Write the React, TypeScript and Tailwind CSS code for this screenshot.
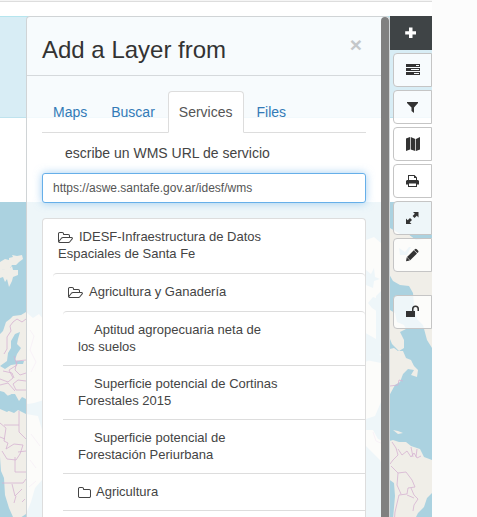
import { useState } from 'react';
import type { ReactNode } from 'react';
import clsx from 'clsx';

function WorldMap() {
  return (
    <svg
      aria-hidden="true"
      className="absolute inset-0 h-full w-full"
      viewBox="0 16 432 501"
      preserveAspectRatio="xMinYMin slice"
    >
      <rect x="0" y="16" width="432" height="501" fill="#fff" />
      <rect x="0" y="16" width="432" height="102" fill="#d8edf5" />
      <rect x="0" y="16" width="432" height="1" fill="#b5e5ee" />
      <rect x="0" y="117" width="432" height="1" fill="#bfe3ee" />
      <rect x="0" y="202" width="432" height="315" fill="#abd2e0" />
      <g fill="#f0eee8">
        <path d="M0 262l5-3 4 1 0-2 4-1-1-2 5 1 5-1 1 4-4 3-3 3-4 0-2 3-6 2-4-1z" />
        <path d="M0 268l4 2 2-3 4 1 2-2 1 4 5 0 0 5-5 2-1 4-3 6-2-8-2 3-2-5-3 1z" />
        <path d="M26 312l-5 3-8 1-3 3-4 3-3 9-3 3v68l4 0 3-6 5-2 4 4 3 7 4-3 5 2 6-1 10-3v-80l-5-6-6 4z" />
        <path d="M0 409l5-1 4 3 5 2 4-3 8 4 12 2 4 14v50l-7 8-4 14-5 12-6 4-7-1-4-9-4-13-1-17-3-7-1-14z" />
        <path d="M366 240l8-3 7 6 9-6 0-9 5 3 7 4 8 0 6 5 16-2v110l-5-8-4-15-6-6-3-14-1-12-4-7-9-1-7-4-4-7-3 12-10 10v43l-14-8z" />
        <path d="M390 310l5 3 2 9 7 3 2 4-6 3 4 8 0 8-5 3-7-7-2-5z" />
        <path d="M390 349l4-1 4 3 5 0 3 7 5 2 3 6 4 4-1 7-6-2 3-5-6-1-5 5-3 8-5 3-6 11-8 6-6 14-9 3-6-4v-50z" />
        <path d="M366 430l7 0 5 9 8 3 7-2 6 2 7 0 5 4 9 3 4 8 8 3v33l-5 5-3 9-6 6-3 6h-22l2-23-1-13-7-5-7-18-14-14z" />
        <path d="M393 430l5 1 5 2-5 1z" />
      </g>
      <g fill="#abd2e0">
        <path d="M20 332l-5 2-4 7 0 7-3 5-1 8-7 5 5 3 6-4 7-1 5 0 1-3-6 0-3-1 2-6 4-6-4-4 1-5z" />
        <path d="M0 391l4 1 5 5 3 5 3-1-4-7 4 0 4 7 3-4 4 2v10l-13-1-6 4-7-3z" />
        <path d="M399 248l6 4 4-5 2 0-4 8-7 0zM408 234l9 1 6 3-8 1z" />
        <path d="M366 270l5 4 3-6 1 9 5 2-6 2-1 7-7-3zM368 303l5-6 6 2-1 13-6-4zM366 340l6 8 9 8v7l-15-3z" />
      </g>
      <g fill="none" stroke="#d5b3d2" strokeWidth="0.8">
        <path d="M26 319l-4 3-5-3-4 3-3 4 1 5-4 6 0 12-3 5M26 360l-9 1-2 9 5 5 6-2M14 356l3 9-8 5 4 8-5 4-8-3M26 381l-8-1-5 4 3 6 10 0M3 371l9 2 2 5M30 330l4 6-4 14 6 12-5 10M0 385l8-2 7 8" />
        <path d="M19 411v21l7 7M19 425H4M0 423l6 5-2 13 4 2-2 6M0 437l5 2M6 449l8-5 9 1-3 9-4 6-9-1-5-8M26 451l-8 1M15 457v15h11M2 483h21l3-4M12 484l3 12 7-7M16 496l-2 7M22 502l3-3M31 434l9 12M30 460l6 8M29 487l7-6" />
        <path d="M390 386l8-1 1-5 4 1M392 442l4 6 2 7-5 5-3 4M398 449l4 6 5-4 4 6 3-4 3 5 4-2M411 447l2 10M417 449l-1 8M391 466l7 7 8-1 6 8 3 7-7 1-1 6-8 1-4 17-1 12M398 473l-1 12 4 9M411 488l3 7 4 4-4 6-1 6M407 495l7 3M373 432l3 9 7 3" />
      </g>
    </svg>
  );
}

function ToolIcon({ children }: { children: ReactNode }) {
  return (
    <svg aria-hidden="true" className="size-3.5 shrink-0" viewBox="0 0 14 14" fill="currentColor">
      {children}
    </svg>
  );
}

const tools: { label: string; apart?: boolean; icon: ReactNode }[] = [
  {
    label: 'Layers',
    icon: <path fillRule="evenodd" d="M0 1h14v3H0zM10 2v1h3V2zM0 5h14v3H0zM5 6v1h8V6zM0 9h14v3H0zM8 10v1h5v-1z" />,
  },
  { label: 'Filter', icon: <path d="M1 2h11v1L8 7.500V13L5.500 11V7.500L1 3z" /> },
  { label: 'Base map', icon: <path d="M0 1.500L4 0v12.500L0 14zM4.700 0L9.300 2v12l-4.600-1.500zM10 2l4-2v12.500L10 14z" /> },
  {
    label: 'Print',
    icon: (
      <path
        fillRule="evenodd"
        d="M2 1h6.500L11 3.500V6h1l1 1v3.500h-2V13H2v-2.500H0V7l1-1h1zM3 2v4h7V4H8V2zM3 9.500V12h7V9.500z"
      />
    ),
  },
  {
    label: 'Full extent',
    icon: <path d="M7 1h5.500v5.500L10.800 4.800 8.500 7 6.600 5.100 8.800 2.800zM0 13V7.500l1.700 1.700L4 7l2 2-2.300 2.300L5.500 13z" />,
  },
  {
    label: 'Draw',
    icon: <path d="M8.800 1.300q1-1 2 0l1.200 1.200q1 1 0 2l-.6.600-3.200-3.200zM7.800 2.300l3.200 3.200-6.800 6.800L1 9.100zM.7 9.300L3.900 12.500 0 13.300z" />,
  },
  {
    label: 'Unlock map',
    apart: true,
    icon: <path d="M0 6h6V4q0-3.500 3.500-3.500T13 4v2h-1.500V4q0-2-2-2t-2 2v2H9v6H0z" />,
  },
];

function Toolbar() {
  return (
    <div role="toolbar" aria-label="Map tools" className="flex w-[42px] shrink-0 flex-col items-end gap-[3px]">
      <button
        type="button"
        aria-label="Add layer"
        className="flex h-[34px] w-full items-center justify-center bg-[#3f4446] text-white"
      >
        <ToolIcon>
          <path d="M5 1.500h3.500v3.700H12v3.300H8.500V12H5V8.500H1.200V5.200H5z" />
        </ToolIcon>
      </button>
      {tools.map((tool) => (
        <button
          key={tool.label}
          type="button"
          aria-label={tool.label}
          className={clsx(
            'flex h-[34px] w-[39px] items-center justify-center rounded-l border border-[#c5c5c5] bg-white/80 text-[#333]',
            tool.apart && 'mt-5',
          )}
        >
          <ToolIcon>{tool.icon}</ToolIcon>
        </button>
      ))}
    </div>
  );
}

function FolderOpenIcon() {
  return (
    <svg
      aria-hidden="true"
      className="mr-1.5 inline-block h-[11px] w-[15px] align-[-2px]"
      viewBox="0 0 1920 1408"
      fill="currentColor"
    >
      <path d="M1781 803q0-35-53-35H640q-40 0-85.500 21.500T483 842l-294 363q-18 24-18 40 0 35 53 35h1088q40 0 86-22t71-53l294-363q18-22 18-39zM640 640h768V480q0-40-28-68t-68-28H736q-40 0-68-28t-28-68v-64q0-40-28-68t-68-28H224q-40 0-68 28t-28 68v853l256-315q44-53 116-87.500T640 640zm1269 163q0 62-46 120l-295 363q-43 53-116 87.500t-140 34.500H224q-92 0-158-66T0 1184V224q0-92 66-158T224 0h320q92 0 158 66t66 158v32h544q92 0 158 66t66 158v160h192q54 0 99 24.500t67 70.500q15 32 15 68z" />
    </svg>
  );
}

function FolderIcon() {
  return (
    <svg
      aria-hidden="true"
      className="mr-[5px] inline-block h-[11px] w-[13px] align-[-2px]"
      viewBox="0 0 1664 1408"
      fill="currentColor"
    >
      <path d="M1536 1184V480q0-40-28-68t-68-28H736q-40 0-68-28t-28-68v-64q0-40-28-68t-68-28H224q-40 0-68 28t-28 68v960q0 40 28 68t68 28h1216q40 0 68-28t28-68zm128-704v704q0 92-66 158t-158 66H224q-92 0-158-66T0 1184V224q0-92 66-158T224 0h320q92 0 158 66t66 158v32h672q92 0 158 66t66 158z" />
    </svg>
  );
}

function TreeButton({ leaf, children }: { leaf?: boolean; children: ReactNode }) {
  return (
    <button
      type="button"
      className={clsx('block w-full pt-[9px] pr-[86px] pb-2.5 pl-[15px] text-left', leaf && 'indent-4')}
    >
      {children}
    </button>
  );
}

const layers = [
  'Aptitud agropecuaria neta de los suelos',
  'Superficie potencial de Cortinas Forestales 2015',
  'Superficie potencial de Forestación Periurbana',
];

function LayerTree() {
  return (
    <ul className="mt-[15px] flex-1 rounded-t border border-b-0 border-[#ddd] bg-white text-[13px] leading-[17px] text-[#444]">
      <li>
        <TreeButton>
          <FolderOpenIcon />
          IDESF-Infraestructura de Datos Espaciales de Santa Fe
        </TreeButton>
        <ul className="mt-px ml-2.5 rounded-t border-t border-[#ddd]">
          <li>
            <TreeButton>
              <FolderOpenIcon />
              Agricultura y Ganadería
            </TreeButton>
            <ul className="mt-px ml-2.5">
              {layers.map((name) => (
                <li key={name} className="border-t border-[#ddd] first:rounded-t">
                  <TreeButton leaf>{name}</TreeButton>
                </li>
              ))}
              <li className="border-y border-[#ddd]">
                <TreeButton>
                  <FolderIcon />
                  Agricultura
                </TreeButton>
              </li>
            </ul>
          </li>
        </ul>
      </li>
    </ul>
  );
}

const tabs = ['Maps', 'Buscar', 'Services', 'Files'];

function AddLayerPanel() {
  const [active, setActive] = useState('Services');
  const [url, setUrl] = useState('https://aswe.santafe.gov.ar/idesf/wms');

  return (
    <section className="ml-[26px] flex min-w-0 flex-1 overflow-hidden rounded-t border border-b-0 border-[#d0d4d6] bg-white/80">
      <div className="flex min-w-0 flex-1 flex-col">
        <header className="flex items-start justify-between border-b border-[#d5d9dc] px-[15px] pt-4 pb-3">
          <h3 className="mt-1 text-2xl leading-[26px] text-[#333]">Add a Layer from</h3>
          <button type="button" aria-label="Close" className="px-1 text-[21px] leading-6 font-bold text-[#c5c8ca]">
            ×
          </button>
        </header>
        <div className="flex flex-1 flex-col px-[15px] pt-[15px]">
          <div role="tablist" className="flex gap-0.5 border-b border-[#ddd] text-sm leading-5">
            {tabs.map((tab) => (
              <button
                key={tab}
                type="button"
                role="tab"
                aria-selected={tab === active}
                onClick={() => setActive(tab)}
                className={clsx(
                  '-mb-px rounded-t border px-2.5 py-2.5',
                  tab === active
                    ? 'border-[#ddd] border-b-white bg-white text-[#555]'
                    : 'border-transparent text-[#337ab7]',
                )}
              >
                {tab}
              </button>
            ))}
          </div>
          <label htmlFor="wms-url" className="my-2.5 block pl-[23px] text-sm leading-5 text-[#444]">
            escribe un WMS URL de servicio
          </label>
          <input
            id="wms-url"
            type="text"
            value={url}
            onChange={(event) => setUrl(event.target.value)}
            className="block h-[30px] w-full shrink-0 rounded-[3px] border border-[#66afe9] bg-white px-2.5 text-xs text-[#555] shadow-[0_0_8px_rgba(102,175,233,0.6)] outline-none"
          />
          <LayerTree />
        </div>
      </div>
      <div aria-hidden="true" className="w-2 shrink-0 rounded-t bg-[#808080]" />
    </section>
  );
}

export default function App() {
  return (
    <div className="flex h-screen overflow-hidden bg-[#fcfcfc] font-['Liberation_Sans',Arial,sans-serif]">
      <main className="flex min-w-0 flex-1 flex-col bg-white">
        <div className="h-0.5 shrink-0 border-b border-[#ddd] bg-[#f5f5f5]" />
        <div className="relative mt-3.5 min-h-0 flex-1 overflow-hidden">
          <WorldMap />
          <div className="relative flex h-full">
            <AddLayerPanel />
            <Toolbar />
          </div>
        </div>
      </main>
      <aside className="w-[45px] shrink-0" />
    </div>
  );
}
